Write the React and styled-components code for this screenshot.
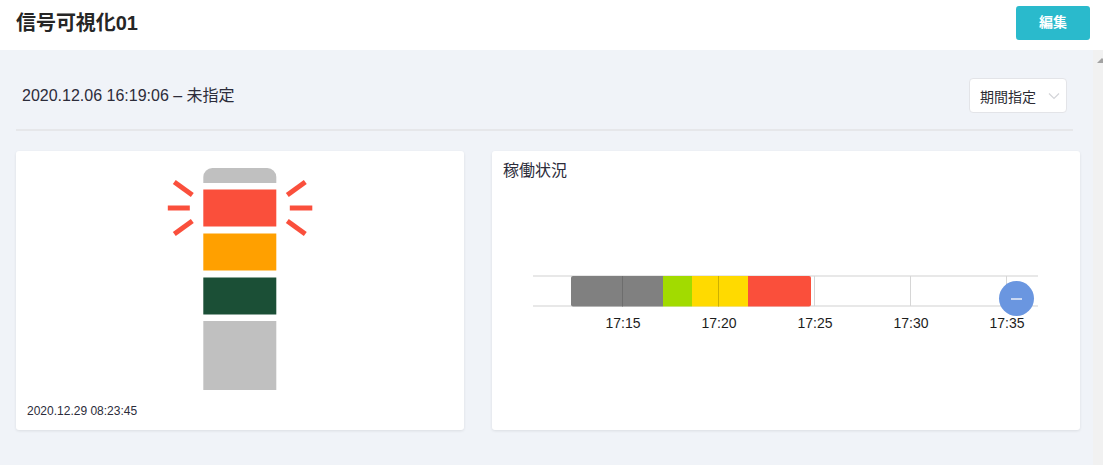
import React from "react";
import styled, { createGlobalStyle } from "styled-components";

const Global = createGlobalStyle`
  html, body { margin: 0; padding: 0; height: 465px; overflow: hidden; background: #f0f3f8; }
  body { font-family: "Liberation Sans", "Noto Sans CJK JP", sans-serif; color: #2b2b2b; }
  * { box-sizing: border-box; }
`;

const Page = styled.div`
  width: 1103px;
  height: 465px;
  display: flex;
  flex-direction: column;
`;

const Header = styled.header`
  height: 50px;
  flex: none;
  background: #fff;
  display: flex;
  align-items: center;
  justify-content: space-between;
  padding: 0 13px 5px 16px;
`;

const Title = styled.h1`
  margin: 0 0 3px;
  font-size: 20px;
  font-weight: 700;
  letter-spacing: -0.05px;
  color: #262626;
`;

const EditButton = styled.button`
  width: 74px;
  height: 34px;
  border: none;
  border-radius: 3px;
  padding: 0 0 3px;
  background: #2abacc;
  color: #fff;
  font: 700 14px "Liberation Sans", "Noto Sans CJK JP", sans-serif;
`;

const Body = styled.div`
  flex: 1;
  display: flex;
  min-height: 0;
`;

const Content = styled.main`
  width: 1093px;
  padding: 0 13px 0 16px;
`;

const FilterRow = styled.div`
  height: 81px;
  padding: 28px 6px 16px 6px;
  border-bottom: 2px solid #e6e7ea;
  width: 1057px;
  display: flex;
  align-items: center;
  justify-content: space-between;
`;

const DateRange = styled.span`
  padding-bottom: 4px;
  font-size: 16px;
  color: #2c2c3a;
`;

const Select = styled.div`
  width: 98px;
  height: 35px;
  background: #fff;
  border: 1px solid #e3e4e8;
  border-radius: 4px;
  padding: 0 6px 0 10px;
  display: flex;
  align-items: center;
  justify-content: space-between;
  font-size: 14px;
  color: #2b2b33;
`;

const Chevron = styled.svg`
  width: 12px;
  height: 8px;
  fill: none;
  stroke: #d4d5d9;
  stroke-width: 1.2;
`;

const Cards = styled.div`
  margin-top: 20px;
  display: flex;
  gap: 28px;
`;

const Card = styled.section`
  width: ${(p) => p.$width}px;
  height: 279px;
  flex: none;
  background: #fff;
  border-radius: 3px;
  box-shadow: 0 1px 3px rgba(0, 0, 0, 0.09);
  position: relative;
`;

const SignalCard = styled(Card)`
  display: flex;
  flex-direction: column;
  align-items: center;
  padding: 17px 0 0;
`;

const SignalSvg = styled.svg`
  width: 146px;
  height: 222px;
  display: block;
`;

const Stamp = styled.div`
  align-self: flex-start;
  margin: 14px 0 0 11px;
  font-size: 12px;
  line-height: 14px;
  color: #2c2c3a;
`;

const ChartTitle = styled.h2`
  margin: 0;
  padding: 11px 11px 0;
  font-size: 16px;
  line-height: 18px;
  font-weight: 400;
  color: #2c2c3a;
`;

const ChartSvg = styled.svg`
  display: block;
  width: 588px;
  height: 250px;
`;

const Tick = styled.text`
  font-size: 14px;
  fill: #1d1d1d;
  text-anchor: middle;
  font-family: "Liberation Sans", sans-serif;
`;

const Fab = styled.button`
  position: absolute;
  left: 507px;
  top: 130px;
  width: 35px;
  height: 35px;
  border: none;
  border-radius: 50%;
  background: #6a96e0;
  padding: 0;
  display: flex;
  align-items: center;
  justify-content: center;
`;

const Minus = styled.span`
  width: 11px;
  height: 2px;
  background: #c9d8f3;
`;

const Scrollbar = styled.div`
  width: 10px;
  flex: none;
  background: #f1f1f1;
  position: relative;
  overflow: hidden;
`;

const ScrollArrow = styled.span`
  position: absolute;
  left: 4px;
  top: 8px;
  border-left: 5px solid transparent;
  border-right: 5px solid transparent;
  border-bottom: 5px solid #a3a3a3;
`;

const bars = [
  [79, 171, "#808080"],
  [171, 200, "#a2db00"],
  [200, 256, "#ffda00"],
  [256, 319, "#fa4f3b"],
];
const grids = [322, 418, 514];
const ticks = [["17:15", 133], ["17:20", 229], ["17:25", 325], ["17:30", 421], ["17:35", 517]];

const Ray = ({ d }) => <path d={d} stroke="#fa4f3c" strokeWidth="5" fill="none" />;

export default function App() {
  return (
    <Page>
      <Global />
      <Header>
        <Title>信号可視化01</Title>
        <EditButton>編集</EditButton>
      </Header>
      <Body>
        <Content>
          <FilterRow>
            <DateRange>2020.12.06 16:19:06 – 未指定</DateRange>
            <Select>
              期間指定
              <Chevron viewBox="0 0 12 8">
                <path d="M1 1.5 L6 6.5 L11 1.5" />
              </Chevron>
            </Select>
          </FilterRow>
          <Cards>
            <SignalCard $width={448}>
              <SignalSvg viewBox="0.7 0 146 222">
                <path d="M37 15V9a9 9 0 0 1 9-9h55a9 9 0 0 1 9 9v6z" fill="#c0c0c0" />
                <rect x="37" y="21.5" width="73" height="37" fill="#fa4f3b" />
                <rect x="37" y="65.5" width="73" height="37" fill="#ffa000" />
                <rect x="37" y="109.5" width="73" height="37" fill="#1b4f36" />
                <rect x="37" y="153" width="73" height="69" fill="#c0c0c0" />
                <Ray d="M8 14 L26 27" />
                <Ray d="M1.5 40 L23.5 40" />
                <Ray d="M8 66 L26 53" />
                <Ray d="M139 14 L121 27" />
                <Ray d="M146 40 L123.5 40" />
                <Ray d="M139 66 L121 53" />
              </SignalSvg>
              <Stamp>2020.12.29 08:23:45</Stamp>
            </SignalCard>
            <Card $width={588}>
              <ChartTitle>稼働状況</ChartTitle>
              <ChartSvg viewBox="0 29 588 250">
                <defs>
                  <clipPath id="bar-clip">
                    <rect x="79" y="125" width="240" height="30.5" rx="2" />
                  </clipPath>
                </defs>
                <rect x="41" y="124" width="505" height="2" fill="#e8e8e8" />
                <rect x="41" y="154" width="505" height="2" fill="#e8e8e8" />
                {grids.map((x) => (
                  <line key={x} x1={x + 0.5} x2={x + 0.5} y1="125" y2="155" stroke="#d6d6d6" />
                ))}
                <g clipPath="url(#bar-clip)">
                  {bars.map(([a, b, c]) => (
                    <rect key={c} x={a} y="125" width={b - a} height="31" fill={c} />
                  ))}
                  <line x1="130.5" x2="130.5" y1="125" y2="156" stroke="#6d6d6d" />
                  <line x1="226.5" x2="226.5" y1="125" y2="156" stroke="#cdb000" />
                </g>
                {ticks.map(([t, x]) => (
                  <Tick key={t} x={x - 2} y="177">{t}</Tick>
                ))}
              </ChartSvg>
              <Fab>
                <Minus />
              </Fab>
            </Card>
          </Cards>
        </Content>
        <Scrollbar>
          <ScrollArrow />
        </Scrollbar>
      </Body>
    </Page>
  );
}
